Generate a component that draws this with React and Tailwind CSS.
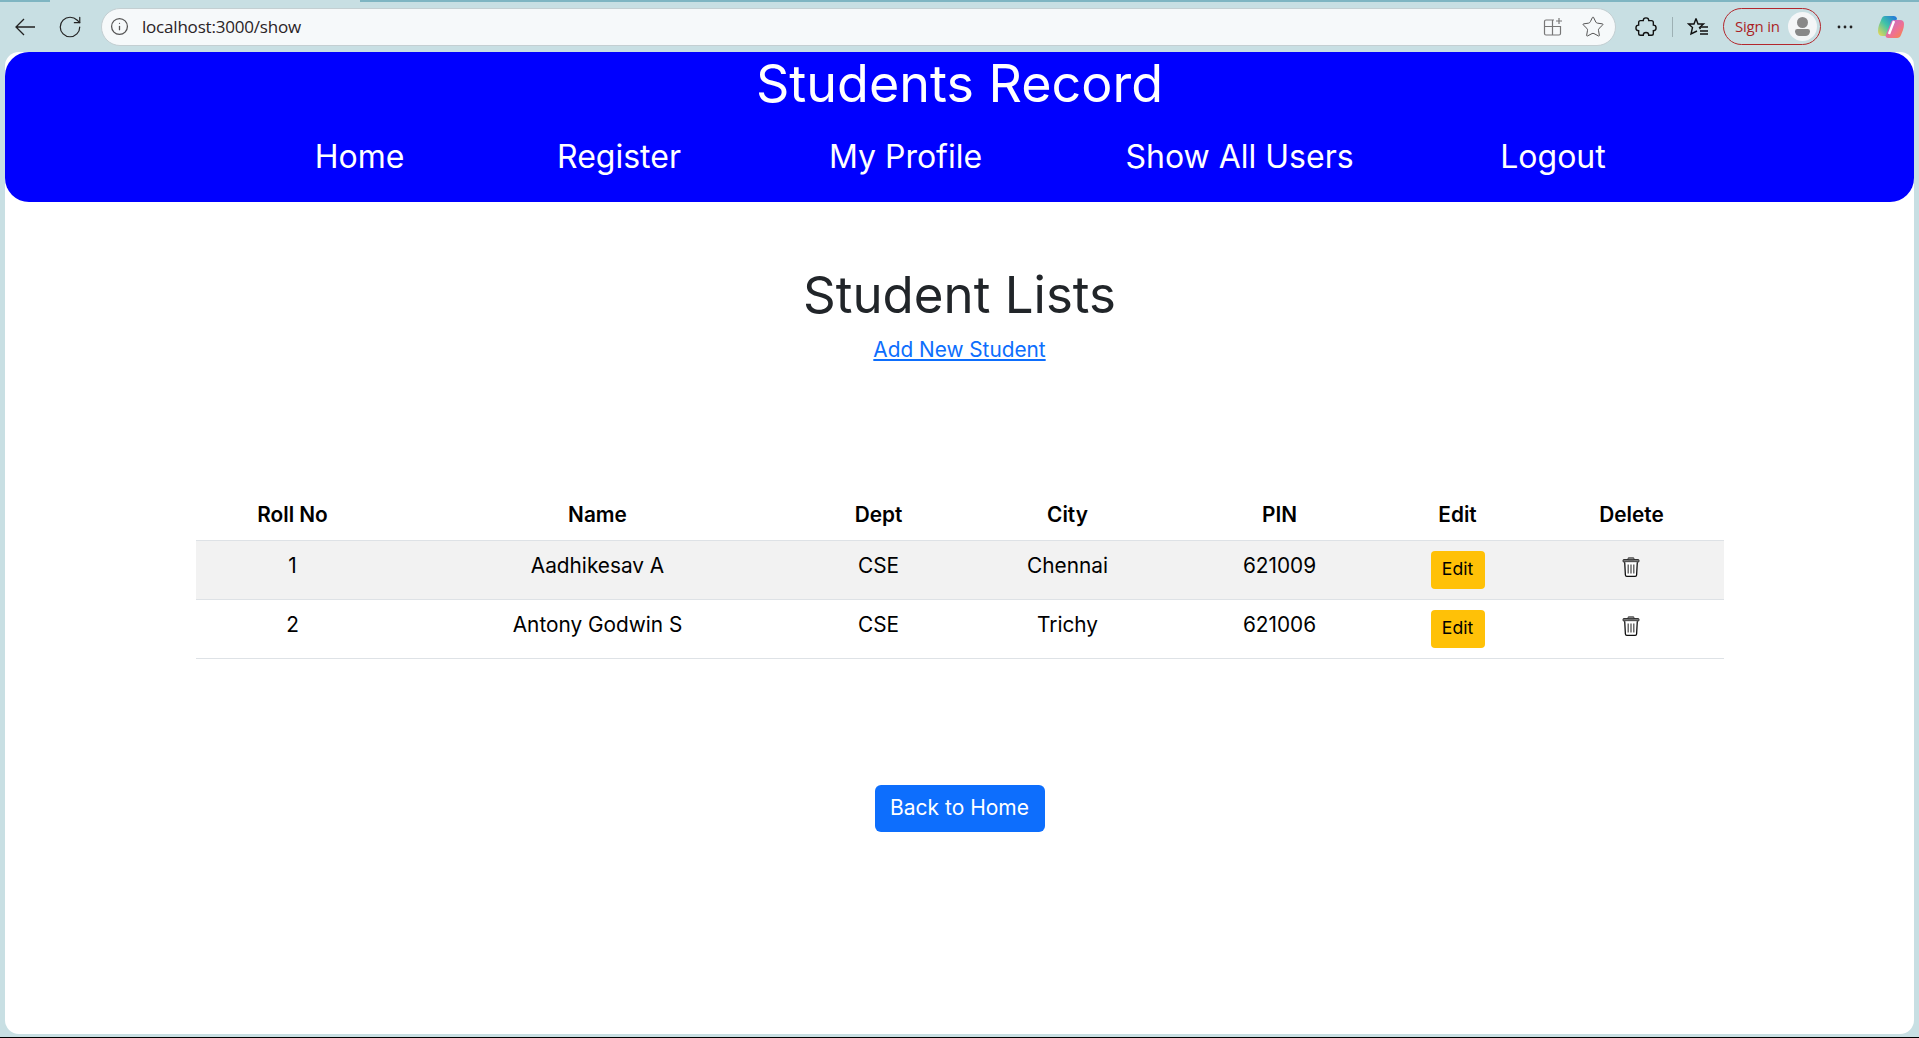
import React from "react";
import { RotateCw, Info, Star } from "lucide-react";

const navItems = [
  { label: "Home", width: "w-[93px]" },
  { label: "Register", width: "w-[126px]" },
  { label: "My Profile", width: "w-[147px]" },
  { label: "Show All Users", width: "w-[221px]" },
  { label: "Logout", width: "w-[106px]" },
];
const students = [
  { roll: 1, name: "Aadhikesav A", dept: "CSE", city: "Chennai", pin: "621009", bg: "bg-[#f2f2f2]" },
  { roll: 2, name: "Antony Godwin S", dept: "CSE", city: "Trichy", pin: "621006", bg: "bg-white" },
];
const headers = ["Roll No", "Name", "Dept", "City", "PIN", "Edit", "Delete"];

function Trash() {
  return (
    <svg width="18" height="20" viewBox="0 0 18 20" className="block">
      <rect x="1" y="2.5" width="16" height="2.6" rx="0.8" fill="#777" stroke="#111" strokeWidth="0.8" />
      <rect x="6" y="0.7" width="6" height="2" rx="0.6" fill="#888" stroke="#111" strokeWidth="0.6" />
      <path d="M2.7 5.2 L3.4 18 Q3.5 19.3 4.8 19.3 H13.2 Q14.5 19.3 14.6 18 L15.3 5.2" fill="#fff" stroke="#111" strokeWidth="1.3" />
      <path d="M6.2 7.5 V16.6 M9 7.5 V16.6 M11.8 7.5 V16.6" stroke="#555" strokeWidth="1.3" />
    </svg>
  );
}

function Chrome() {
  return (
    <div className="h-[52px] shrink-0 flex flex-col text-[#222]" style={{ fontFamily: '"Open Sans", sans-serif' }}>
      <div className="h-[2px] flex justify-between">
        <div className="w-[50px] bg-[#7fb5c2]" />
        <div className="w-[1559px] bg-[#7fb5c2]" />
      </div>
      <div className="flex-1 flex items-center pb-[1px]">
        <svg className="ml-[14px]" width="22" height="20" viewBox="0 0 22 20" fill="none" stroke="#222" strokeWidth="1.3">
          <path d="M21 10 H2 M10 2 L2 10 L10 18" />
        </svg>
        <RotateCw className="ml-[21px] w-[26px] h-[26px] text-[#222]" strokeWidth={1.1} />
        <div className="ml-[18px] w-[1515px] h-[38px] rounded-full bg-[#f6f9fa] border border-[#c4cfd2] flex items-center">
          <Info className="ml-[8px] w-[19px] h-[19px] text-[#555]" strokeWidth={1.6} />
          <span className="ml-[13px] text-[17px] tracking-[-0.2px] text-[#2a2326]">localhost:3000/show</span>
          <div className="ml-auto flex items-center">
            <svg width="20" height="20" viewBox="0 0 20 20" fill="none" stroke="#777" strokeWidth="1.2">
              <path d="M11 3 H3 Q1.5 3 1.5 4.5 V16.5 Q1.5 18 3 18 H16 Q17.5 18 17.5 16.5 V9.5 H1.5 M9.5 3 V18" />
              <path d="M16 1 V7 M13 4 H19" />
            </svg>
            <Star className="ml-[18px] mr-[10px] w-[24px] h-[24px] text-[#555]" strokeWidth={1} />
          </div>
        </div>
        <svg className="ml-[19px]" width="22" height="22" viewBox="0 0 24 24" fill="none" stroke="#111" strokeWidth="1.5">
          <path d="M9 5 Q9 2 12 2 Q15 2 15 5 H18 Q20 5 20 7 V10 Q23 10 23 13 Q23 16 20 16 V19 Q20 21 18 21 H15 Q15 18 12 18 Q9 18 9 21 H6 Q4 21 4 19 V16 Q1 16 1 13 Q1 10 4 10 V7 Q4 5 6 5 Z" />
        </svg>
        <div className="ml-[15px] w-px h-[20px] bg-[#9db0b4]" />
        <svg className="ml-[14px]" width="22" height="22" viewBox="0 0 22 22" fill="none" stroke="#111" strokeWidth="1.4">
          <path d="M9 2.5 L11 8 H16.5 L12.5 11.5 L13.5 13 M9 2.5 L7 8 H1.5 L5.5 11.5 L4 18 L10 15" />
          <path d="M13 11 H21 M13 15 H21 M13 18 H21" />
        </svg>
        <div className="ml-[14px] w-[98px] h-[37px] rounded-full border border-[#b3272d] flex items-center justify-between">
          <span className="ml-[11px] text-[15px] text-[#ab1f26] tracking-[-0.2px]">Sign in</span>
          <div className="mr-[3px] w-[29px] h-[29px] rounded-full bg-[#f4f6f7] flex flex-col items-center justify-center">
            <div className="w-[11px] h-[11px] rounded-full bg-[#888]" />
            <div className="mt-[1px] w-[15px] h-[7px] rounded-b-[6px] rounded-t-[3px] bg-[#888]" />
          </div>
        </div>
        <svg className="ml-[16px]" width="16" height="4" viewBox="0 0 16 4" fill="#222">
          <circle cx="2" cy="2" r="1.4" />
          <circle cx="8" cy="2" r="1.4" />
          <circle cx="14" cy="2" r="1.4" />
        </svg>
        <svg className="ml-[24px]" width="28" height="28" viewBox="0 0 28 28">
          <defs>
            <linearGradient id="cpa" x1="0" y1="1" x2="1" y2="0">
              <stop offset="0" stopColor="#f5d94e" />
              <stop offset="0.5" stopColor="#3fc3a8" />
              <stop offset="1" stopColor="#1f6fe0" />
            </linearGradient>
            <linearGradient id="cpb" x1="0" y1="0" x2="1" y2="1">
              <stop offset="0" stopColor="#b46be0" />
              <stop offset="0.6" stopColor="#f0718f" />
              <stop offset="1" stopColor="#f98a3c" />
            </linearGradient>
          </defs>
          <path d="M8 3 H17 Q19.5 3 20 5.5 L15 20 Q14 23 11 23 H5.5 Q1 23 1 18 Q1 15 2 12 L4.5 6 Q5.5 3 8 3 Z" fill="url(#cpa)" />
          <path d="M17 7 H23 Q27 7 27 11 Q27 14 26 17 L24 22 Q23 25 20 25 H11 Q9 25 8.5 23 L14 9 Q14.7 7 17 7 Z" fill="url(#cpb)" />
          <path d="M17 8 L12 21" stroke="#fff" strokeWidth="2.4" fill="none" />
        </svg>
      </div>
    </div>
  );
}

export default function App() {
  return (
    <div className="h-[1038px] overflow-hidden bg-[#c8dfe3] flex flex-col border-b border-black" style={{ fontFamily: 'Inter, sans-serif' }}>
      <Chrome />
      <div className="mx-[5px] h-[982px] bg-white rounded-[14px] flex flex-col">
        <header className="h-[150px] bg-[#0000ff] rounded-[24px] text-white flex flex-col items-center">
          <h1 className="mt-[3px] text-[52px] leading-[58px] font-normal">Students Record</h1>
          <nav className="mt-[27px] flex gap-[150px] text-[32px] leading-[34px]">
            {navItems.map((n) => (
              <span key={n.label} className={`${n.width} flex justify-center whitespace-nowrap`}>{n.label}</span>
            ))}
          </nav>
        </header>
        <main className="flex flex-col items-center">
          <h2 className="mt-[64px] text-[51px] leading-[58px] text-[#212529] font-normal">Student Lists</h2>
          <a href="#" className="mt-[12px] text-[20.8px] leading-[28px] text-[#0d6efd] underline">Add New Student</a>
          <table className="mt-[129px] w-[1528px] table-fixed border-collapse text-[20.8px] text-black">
            <colgroup>
              <col className="w-[194px]" />
              <col className="w-[416px]" />
              <col className="w-[146px]" />
              <col className="w-[232px]" />
              <col className="w-[192px]" />
              <col className="w-[164px]" />
              <col className="w-[184px]" />
            </colgroup>
            <thead>
              <tr className="h-[47px] border-b border-[#dee2e6]">
                {headers.map((h) => (
                  <th key={h} className="font-semibold text-center align-top pt-[7px] leading-[30px]">{h}</th>
                ))}
              </tr>
            </thead>
            <tbody>
              {students.map((s) => (
                <tr key={s.roll} className={`h-[59px] border-b border-[#dee2e6] ${s.bg}`}>
                  <td className="text-center align-top pt-[10px] leading-[30px]">{s.roll}</td>
                  <td className="text-center align-top pt-[10px] leading-[30px]">{s.name}</td>
                  <td className="text-center align-top pt-[10px] leading-[30px]">{s.dept}</td>
                  <td className="text-center align-top pt-[10px] leading-[30px]">{s.city}</td>
                  <td className="text-center align-top pt-[10px] leading-[30px]">{s.pin}</td>
                  <td className="text-center align-top pt-[10px]">
                    <button className="w-[54px] h-[38px] rounded-[4px] bg-[#ffc107] text-[17.6px] text-black">Edit</button>
                  </td>
                  <td className="align-top pt-[16px]">
                    <div className="flex justify-center pr-[2px]"><Trash /></div>
                  </td>
                </tr>
              ))}
            </tbody>
          </table>
          <button className="mt-[126px] w-[170px] h-[47px] rounded-[6px] bg-[#0d6efd] text-white text-[21px]">Back to Home</button>
        </main>
      </div>
    </div>
  );
}
